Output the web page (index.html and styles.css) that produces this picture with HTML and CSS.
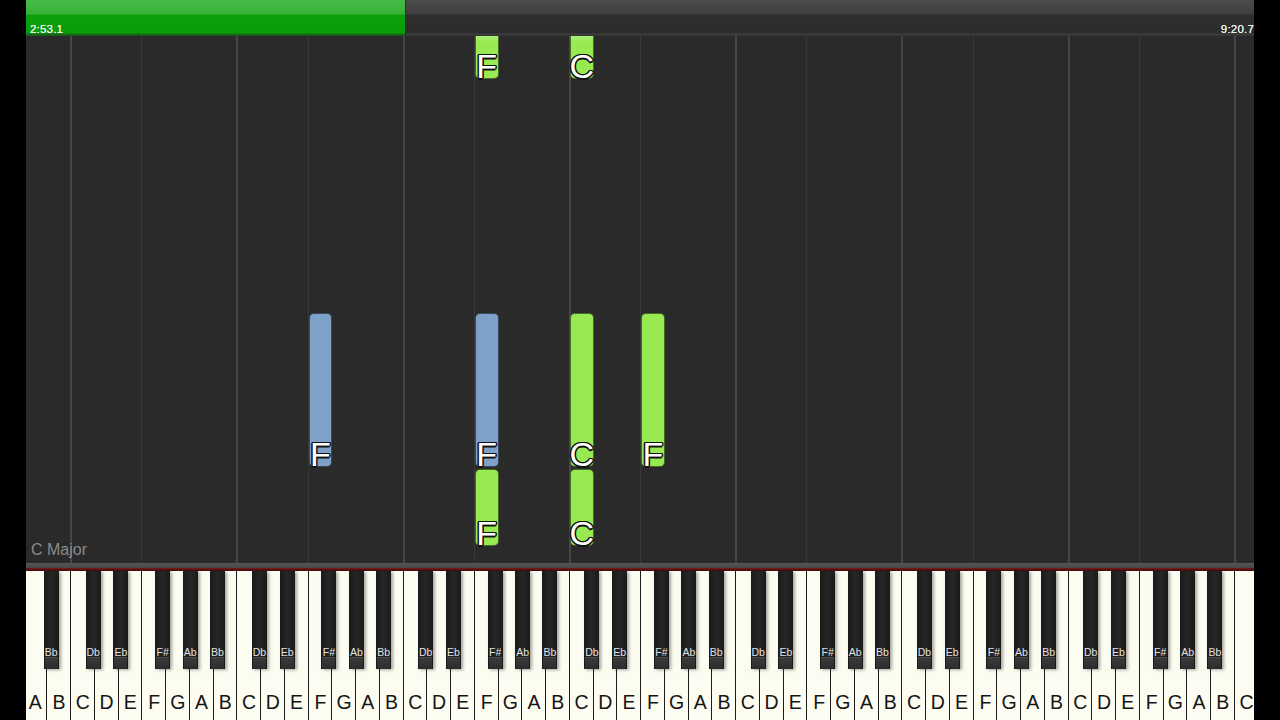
FILE: index.html
```html
<!DOCTYPE html>
<html>
<head>
<meta charset="utf-8">
<link rel="stylesheet" href="styles.css">
</head>
<body>
<div class="screen">
  <div class="progress">
    <div class="fill"></div>
    <span class="time">2:53.1</span>
    <span class="time">9:20.7</span>
  </div>
  <div class="roll">
    <div class="grid c" style="left:45px"></div>
    <div class="grid f" style="left:116.3px"></div>
    <div class="grid c" style="left:211.3px"></div>
    <div class="grid f" style="left:282.6px"></div>
    <div class="grid c" style="left:377.6px"></div>
    <div class="grid f" style="left:448.8px"></div>
    <div class="grid c" style="left:543.9px"></div>
    <div class="grid f" style="left:615.1px"></div>
    <div class="grid c" style="left:710.2px"></div>
    <div class="grid f" style="left:781.4px"></div>
    <div class="grid c" style="left:876.4px"></div>
    <div class="grid f" style="left:947.7px"></div>
    <div class="grid c" style="left:1042.7px"></div>
    <div class="grid f" style="left:1113.9px"></div>
    <div class="grid c" style="left:1209px"></div>

    <div class="note green top" style="left:448.8px;top:-4px;height:47px"><span>F</span></div>
    <div class="note green top" style="left:543.9px;top:-4px;height:47px"><span>C</span></div>

    <div class="note blue" style="left:282.6px;top:277px;height:154px"><span>F</span></div>
    <div class="note blue" style="left:448.8px;top:277px;height:154px"><span>F</span></div>
    <div class="note green" style="left:543.9px;top:277px;height:154px"><span>C</span></div>
    <div class="note green" style="left:615.1px;top:277px;height:154px"><span>F</span></div>
    <div class="note green" style="left:448.8px;top:433px;height:77px"><span>F</span></div>
    <div class="note green" style="left:543.9px;top:433px;height:77px"><span>C</span></div>

    <div class="key-name">C Major</div>
  </div>
  <div class="rail"></div>
  <div class="felt"></div>
  <div class="keys">
    <div class="keybed">
      <div class="octave">
        <div class="w"><span>A</span></div><div class="w"><span>B</span></div>
        <div class="b bb0"><span>Bb</span></div>
      </div>
      <div class="octave">
        <div class="w"><span>C</span></div><div class="w"><span>D</span></div><div class="w"><span>E</span></div><div class="w"><span>F</span></div><div class="w"><span>G</span></div><div class="w"><span>A</span></div><div class="w"><span>B</span></div>
        <div class="b db"><span>Db</span></div><div class="b eb"><span>Eb</span></div><div class="b fs"><span>F#</span></div><div class="b ab"><span>Ab</span></div><div class="b bb"><span>Bb</span></div>
      </div>
      <div class="octave">
        <div class="w"><span>C</span></div><div class="w"><span>D</span></div><div class="w"><span>E</span></div><div class="w"><span>F</span></div><div class="w"><span>G</span></div><div class="w"><span>A</span></div><div class="w"><span>B</span></div>
        <div class="b db"><span>Db</span></div><div class="b eb"><span>Eb</span></div><div class="b fs"><span>F#</span></div><div class="b ab"><span>Ab</span></div><div class="b bb"><span>Bb</span></div>
      </div>
      <div class="octave">
        <div class="w"><span>C</span></div><div class="w"><span>D</span></div><div class="w"><span>E</span></div><div class="w"><span>F</span></div><div class="w"><span>G</span></div><div class="w"><span>A</span></div><div class="w"><span>B</span></div>
        <div class="b db"><span>Db</span></div><div class="b eb"><span>Eb</span></div><div class="b fs"><span>F#</span></div><div class="b ab"><span>Ab</span></div><div class="b bb"><span>Bb</span></div>
      </div>
      <div class="octave">
        <div class="w"><span>C</span></div><div class="w"><span>D</span></div><div class="w"><span>E</span></div><div class="w"><span>F</span></div><div class="w"><span>G</span></div><div class="w"><span>A</span></div><div class="w"><span>B</span></div>
        <div class="b db"><span>Db</span></div><div class="b eb"><span>Eb</span></div><div class="b fs"><span>F#</span></div><div class="b ab"><span>Ab</span></div><div class="b bb"><span>Bb</span></div>
      </div>
      <div class="octave">
        <div class="w"><span>C</span></div><div class="w"><span>D</span></div><div class="w"><span>E</span></div><div class="w"><span>F</span></div><div class="w"><span>G</span></div><div class="w"><span>A</span></div><div class="w"><span>B</span></div>
        <div class="b db"><span>Db</span></div><div class="b eb"><span>Eb</span></div><div class="b fs"><span>F#</span></div><div class="b ab"><span>Ab</span></div><div class="b bb"><span>Bb</span></div>
      </div>
      <div class="octave">
        <div class="w"><span>C</span></div><div class="w"><span>D</span></div><div class="w"><span>E</span></div><div class="w"><span>F</span></div><div class="w"><span>G</span></div><div class="w"><span>A</span></div><div class="w"><span>B</span></div>
        <div class="b db"><span>Db</span></div><div class="b eb"><span>Eb</span></div><div class="b fs"><span>F#</span></div><div class="b ab"><span>Ab</span></div><div class="b bb"><span>Bb</span></div>
      </div>
      <div class="octave">
        <div class="w"><span>C</span></div><div class="w"><span>D</span></div><div class="w"><span>E</span></div><div class="w"><span>F</span></div><div class="w"><span>G</span></div><div class="w"><span>A</span></div><div class="w"><span>B</span></div>
        <div class="b db"><span>Db</span></div><div class="b eb"><span>Eb</span></div><div class="b fs"><span>F#</span></div><div class="b ab"><span>Ab</span></div><div class="b bb"><span>Bb</span></div>
      </div>
      <div class="octave">
        <div class="w"><span>C</span></div>
      </div>
    </div>
  </div>
</div>
</body>
</html>
```
FILE: styles.css
```css
* { box-sizing: border-box; }
html, body { margin: 0; padding: 0; background: #000; }
body { font-family: "Liberation Sans", Arial, sans-serif; }

.screen {
  width: 1228px;
  height: 720px;
  margin-left: 26px;
  display: flex;
  flex-direction: column;
  overflow: hidden;
}

/* progress bar */
.progress {
  position: relative;
  height: 36px;
  flex: 0 0 36px;
  display: flex;
  justify-content: space-between;
  align-items: flex-end;
  padding: 0 0 0 4px;
  background: linear-gradient(#4c4c4c 0, #3e3e3e 14px, #2e2e2e 15px, #2c2c2c 33px, #404040 34px, #303030 36px);
}
.fill {
  position: absolute;
  left: 0; top: 0; bottom: 0;
  width: 380px;
  background: linear-gradient(#46bb46 0, #38b238 14px, #0ca00c 15px, #089c08 33px, #1d6a1d 34px, #155515 36px);
  border-right: 1px solid #1e3a1e;
}
.time {
  position: relative;
  font-size: 11.5px;
  line-height: 13px;
  color: #eef6ee;
  letter-spacing: 0.2px;
  text-shadow: 0 0 0.4px #eef6ee;
}

/* note roll */
.roll {
  position: relative;
  flex: 0 0 527px;
  background: #2a2a2a;
  overflow: hidden;
  display: flex;
  flex-direction: column;
  justify-content: flex-end;
  padding: 0 0 4px 5px;
}
.grid {
  position: absolute;
  top: 0; bottom: 0;
  margin-left: -1px;
}
.grid.c { width: 2px; background: #464646; }
.grid.f { width: 1px; background: #383838; }

.note {
  position: absolute;
  width: 23.8px;
  border-radius: 5px;
  border: 1px solid rgba(0,0,0,0.55);
  display: flex;
  flex-direction: column;
  justify-content: flex-end;
  align-items: center;
  overflow: visible;
}
.note.blue { background: #7ea1c7; }
.note.green { background: #99ea52; }
.note.top { background: linear-gradient(#b7ee8c 0, #99ea52 9px, #99ea52 100%); }
.note span {
  font-size: 34px;
  line-height: 26px;
  height: 26px;
  color: #fff;
  margin-bottom: -1px;
  text-shadow:
    -1.5px 0 0 #111, 1.5px 0 0 #111, 0 -1.5px 0 #111, 0 1.5px 0 #111,
    -1px -1px 0 #111, 1px -1px 0 #111, -1px 1px 0 #111, 1px 1px 0 #111;
}

.key-name {
  position: relative;
  font-size: 16px;
  line-height: 18px;
  color: #8b8b8b;
}

/* keyboard rails */
.rail {
  flex: 0 0 5px;
  background: linear-gradient(#565656, #474747);
}
.felt {
  flex: 0 0 3px;
  background: linear-gradient(#7a1c1c, #3a0a0a);
}

.keys {
  flex: 0 0 149px;
  overflow: hidden;
  background: #fcfcf1;
}
.keybed {
  display: flex;
  height: 100%;
  margin-left: -2.51px;
}
.octave {
  position: relative;
  display: flex;
  height: 100%;
}
.w {
  flex: 0 0 23.755px;
  height: 100%;
  background: #fcfcf1;
  border-right: 1px solid #1c1c1c;
  display: flex;
  align-items: flex-end;
  justify-content: center;
  padding-bottom: 7px;
}
.w span {
  font-size: 19.5px;
  line-height: 22px;
  color: #151515;
  margin-right: -1px;
}
.b {
  position: absolute;
  top: 0;
  width: 15px;
  height: 98px;
  background: linear-gradient(90deg, #1a1a1a, #262626 50%, #1a1a1a);
  box-shadow: 2px 1px 3px rgba(0,0,0,0.35);
  display: flex;
  flex-direction: column;
  justify-content: flex-end;
  align-items: center;
  padding-bottom: 11px;
}
.b::after {
  content: "";
  position: absolute;
  left: 1px; right: 1px; bottom: 0;
  height: 11px;
  background: linear-gradient(#3a3a3a, #2c2c2c);
  border-top: 1px solid #4a4a4a;
}
.b span {
  font-size: 10.5px;
  line-height: 12px;
  color: #e2e2e2;
}
.bb0 { left: 20.06px; }
.db { left: 14.66px; }
.eb { left: 42.41px; }
.fs { left: 84.22px; }
.ab { left: 111.58px; }
.bb { left: 138.83px; }
```
